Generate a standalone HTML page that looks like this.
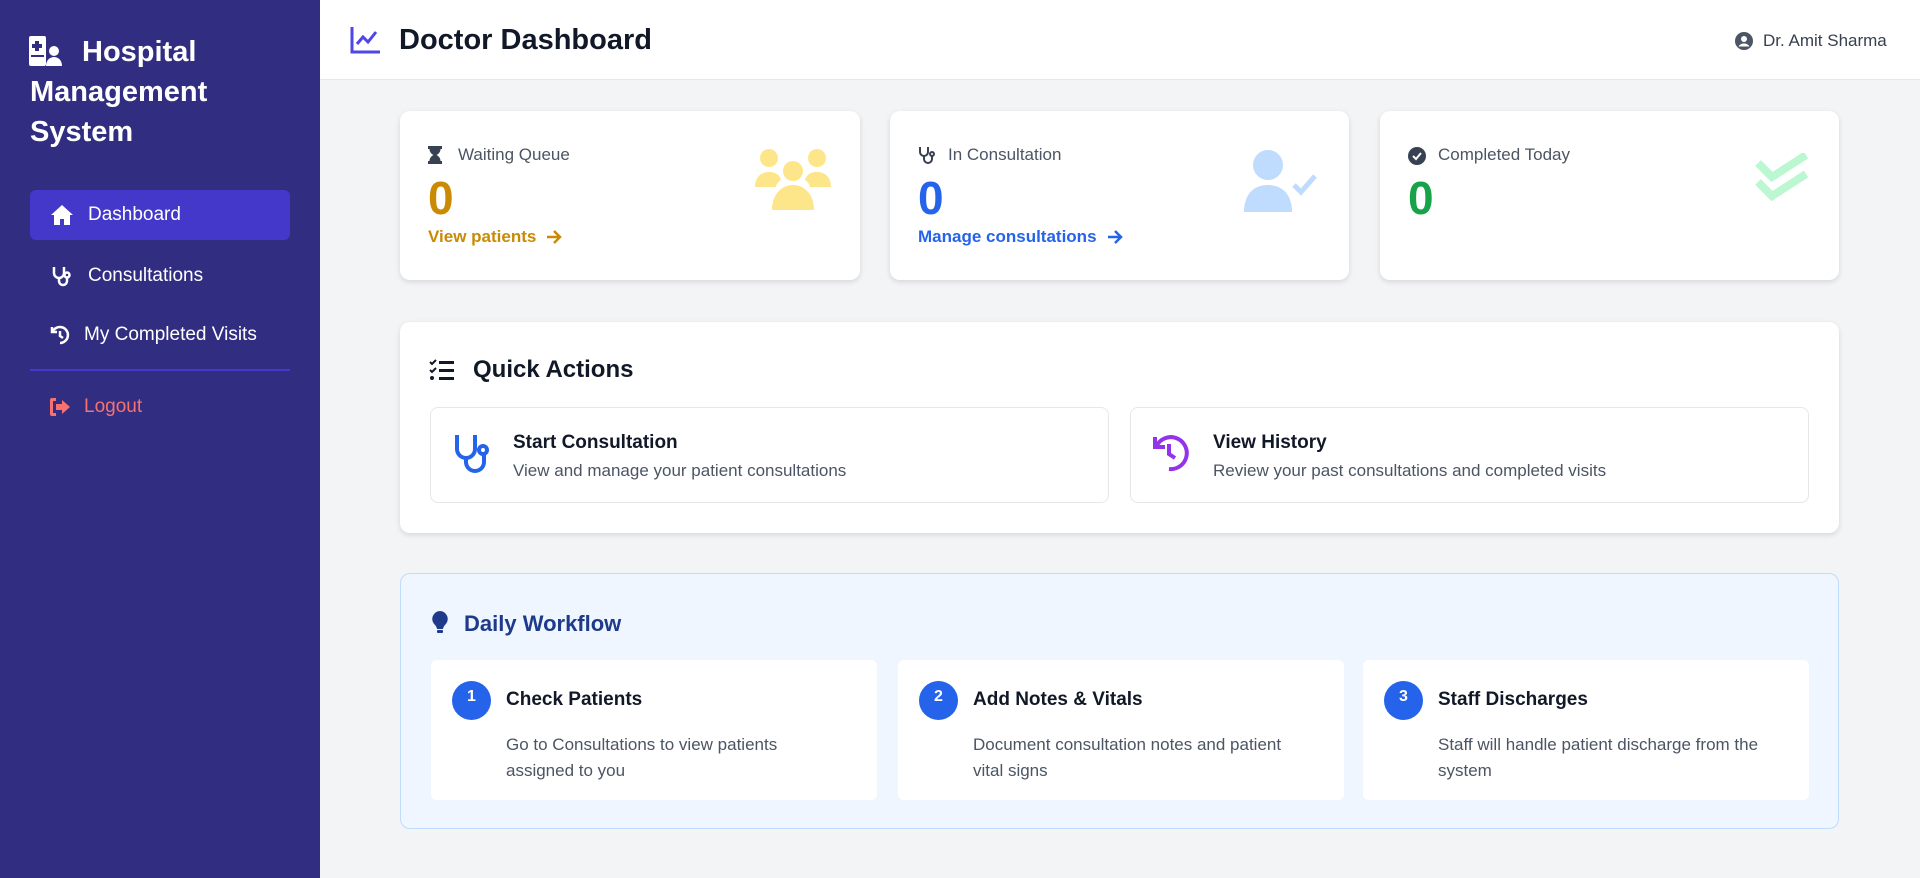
<!DOCTYPE html>
<html><head><meta charset="utf-8"><style>
*{box-sizing:border-box;margin:0;padding:0}
body{width:1920px;height:878px;overflow:hidden;background:#f3f4f6;font-family:"Liberation Sans",sans-serif;position:relative}
.a{position:absolute}
.side{left:0;top:0;width:320px;height:878px;background:#312e81;color:#fff}
.nav{position:absolute;left:30px;width:260px;height:50px;border-radius:6px;display:flex;align-items:center;font-size:19px;color:#fff}
.card{position:absolute;background:#fff;border-radius:10px;box-shadow:0 2px 6px rgba(0,0,0,.12)}
.lbl{position:absolute;top:34px;left:58px;font-size:17px;color:#4b5563}
.num{position:absolute;top:60px;left:28px;font-size:46px;font-weight:bold}
.lnk{position:absolute;top:116px;left:28px;font-size:17px;font-weight:bold;display:flex;align-items:center}
.lnk svg{margin-left:10px}
.ab{position:absolute;top:85px;height:96px;border:1px solid #e5e7eb;border-radius:8px;background:#fff}
.ab h3{position:absolute;left:82px;top:24px;font-size:19px;color:#111827}
.ab p{position:absolute;left:82px;top:53px;font-size:17px;color:#4b5563}
.st{position:absolute;top:86px;width:446px;height:140px;background:#fff;border-radius:6px}
.st .c{position:absolute;left:21px;top:21px;width:39px;height:39px;border-radius:50%;background:#2563eb;color:#fff;font-weight:bold;font-size:16px;text-align:center;line-height:32px}
.st h3{position:absolute;left:75px;top:29px;font-size:19px;color:#111827}
.st p{position:absolute;left:75px;top:72px;width:340px;font-size:17px;line-height:26px;color:#4b5563}
</style></head><body>
<div class="a side">
 <svg class="a" style="left:29px;top:36px" width="34" height="30" viewBox="0 0 34 30"><rect x="0" y="0" width="17" height="30" rx="2" fill="#fff"/><path d="M6 5h4v3h3v4h-3v3H6v-3H3V8h3z" fill="#312e81"/><rect x="2" y="19" width="13" height="2" fill="#312e81"/><circle cx="25" cy="15" r="5" fill="#fff"/><path d="M17 30c0-6 4-9 8-9s8 3 8 9z" fill="#fff"/></svg>
 <div class="a" style="left:30px;top:32px;font-size:29px;font-weight:bold;line-height:40px;width:270px;text-indent:52px">Hospital Management System</div>
 <div class="nav" style="top:190px;background:#4338ca"><svg style="margin:0 14px 0 20px" width="24" height="22" viewBox="0 0 24 22"><path d="M12 1L1 11h3v10h6v-6h4v6h6V11h3z" fill="#fff"/></svg>Dashboard</div>
 <div class="nav" style="top:251px"><svg style="margin:0 14px 0 20px" width="24" height="24" viewBox="0 0 24 24" fill="none" stroke="#fff" stroke-width="2.5"><path d="M4 3v6a5 5 0 0010 0V3M9 14v3a4 4 0 008 0v-3"/><circle cx="17" cy="11" r="2.5"/></svg>Consultations</div>
 <div class="nav" style="top:310px"><svg style="margin:0 12px 0 18px" width="24" height="24" viewBox="0 0 24 24" fill="none" stroke="#fff" stroke-width="2.5"><path d="M4 4v5h5"/><path d="M4.5 9A8 8 0 1112 20"/><path d="M12 8v5l3 2"/></svg>My Completed Visits</div>
 <div class="a" style="left:30px;top:369px;width:260px;height:2px;background:#4338ca"></div>
 <div class="nav" style="top:382px;color:#f87171"><svg style="margin:0 12px 0 18px" width="24" height="22" viewBox="0 0 24 22" fill="#f87171"><path d="M8 2H4a2 2 0 00-2 2v14a2 2 0 002 2h4v-3H5V5h3z"/><path d="M14 4l8 7-8 7v-4H8V8h6z"/></svg>Logout</div>
</div>
<div class="a" style="left:320px;top:0;width:1600px;height:80px;background:#fff;border-bottom:1px solid #e5e7eb"></div>
<svg class="a" style="left:350px;top:26px" width="32" height="28" viewBox="0 0 32 28" fill="none" stroke="#4f46e5" stroke-width="3"><path d="M2 1v25h28"/><path d="M7 18l6-7 5 5 8-10"/></svg>
<div class="a" style="left:399px;top:24px;font-size:29px;font-weight:bold;color:#111827">Doctor Dashboard</div>
<svg class="a" style="left:1735px;top:32px" width="18" height="18" viewBox="0 0 18 18"><circle cx="9" cy="9" r="9" fill="#4b5563"/><circle cx="9" cy="7" r="3" fill="#fff"/><path d="M3.5 14.5c1.5-2.5 3.5-3 5.5-3s4 .5 5.5 3" fill="#fff"/></svg>
<div class="a" style="left:1763px;top:31px;font-size:17px;color:#374151">Dr. Amit Sharma</div>

<div class="card" style="left:400px;top:111px;width:460px;height:169px">
 <svg class="a" style="left:28px;top:35px" width="14" height="18" viewBox="0 0 14 18" fill="#374151"><path d="M0 0h14v3h-1.5c0 3-2 5-4 6 2 1 4 3 4 6H14v3H0v-3h1.5c0-3 2-5 4-6-2-1-4-3-4-6H0z"/></svg>
 <div class="lbl">Waiting Queue</div><div class="num" style="color:#ca8a04">0</div>
 <div class="lnk" style="color:#ca8a04">View patients<svg width="16" height="14" viewBox="0 0 16 14" fill="none" stroke="#ca8a04" stroke-width="2.5"><path d="M1 7h13M8 1l6 6-6 6"/></svg></div>
 <svg class="a" style="left:354px;top:36px" width="78" height="64" viewBox="0 0 78 64" fill="#fde68a"><circle cx="15" cy="11" r="9"/><circle cx="63" cy="11" r="9"/><circle cx="39" cy="24" r="10"/><path d="M1 40c0-10 6-15 14-15s11 4 12 8c-3 2-5 5-5 7z"/><path d="M77 40c0-10-6-15-14-15s-11 4-12 8c3 2 5 5 5 7z"/><path d="M18 63c0-15 9-25 21-25s21 10 21 25z"/></svg>
</div>
<div class="card" style="left:890px;top:111px;width:459px;height:169px">
 <svg class="a" style="left:28px;top:35px" width="18" height="20" viewBox="0 0 18 20" fill="none" stroke="#374151" stroke-width="2"><path d="M2 1v5a4 4 0 008 0V1M6 10v3a4 4 0 008 0v-3"/><circle cx="14" cy="8" r="2"/></svg>
 <div class="lbl">In Consultation</div><div class="num" style="color:#2563eb">0</div>
 <div class="lnk" style="color:#2563eb">Manage consultations<svg width="16" height="14" viewBox="0 0 16 14" fill="none" stroke="#2563eb" stroke-width="2.5"><path d="M1 7h13M8 1l6 6-6 6"/></svg></div>
 <svg class="a" style="left:354px;top:38px" width="78" height="64" viewBox="0 0 78 64" fill="#bfdbfe"><circle cx="24" cy="16" r="15"/><path d="M0 63c0-18 10-27 24-27s24 9 24 27z"/><path d="M50 36l7 7 14-16" fill="none" stroke="#bfdbfe" stroke-width="5"/></svg>
</div>
<div class="card" style="left:1380px;top:111px;width:459px;height:169px">
 <svg class="a" style="left:28px;top:36px" width="18" height="18" viewBox="0 0 18 18"><circle cx="9" cy="9" r="9" fill="#374151"/><path d="M5 9l3 3 5-6" stroke="#fff" stroke-width="2" fill="none"/></svg>
 <div class="lbl">Completed Today</div><div class="num" style="color:#16a34a">0</div>
 <svg class="a" style="left:375px;top:42px" width="56" height="54" viewBox="0 0 56 54" fill="none" stroke="#bbf7d0" stroke-width="8"><path d="M3 10l14 14 34-22"/><path d="M3 29l14 14 34-22"/></svg>
</div>

<div class="card" style="left:400px;top:322px;width:1439px;height:211px">
 <svg class="a" style="left:29px;top:37px" width="26" height="22" viewBox="0 0 26 22" fill="#111827"><path d="M1 3l2 2 4-4" stroke="#111827" stroke-width="2" fill="none"/><path d="M1 11l2 2 4-4" stroke="#111827" stroke-width="2" fill="none"/><circle cx="3" cy="19" r="2"/><rect x="10" y="2" width="15" height="3"/><rect x="10" y="10" width="15" height="3"/><rect x="10" y="18" width="15" height="3"/></svg>
 <div class="a" style="left:73px;top:34px;font-size:24px;font-weight:bold;color:#111827">Quick Actions</div>
 <div class="ab" style="left:30px;width:679px"><svg class="a" style="left:22px;top:25px" width="36" height="42" viewBox="0 0 36 42" fill="none" stroke="#2563eb" stroke-width="4"><path d="M4 2v14a9 9 0 0018 0V2"/><path d="M13 25v4a9 9 0 0018 0v-7"/><circle cx="30" cy="17" r="4"/></svg><h3>Start Consultation</h3><p>View and manage your patient consultations</p></div>
 <div class="ab" style="left:730px;width:679px"><svg class="a" style="left:18px;top:25px" width="40" height="40" viewBox="0 0 40 40" fill="none" stroke="#9333ea" stroke-width="4"><path d="M6 4v10h10"/><path d="M7 14A16 16 0 1120 36"/><path d="M20 11v10l6 4"/></svg><h3>View History</h3><p>Review your past consultations and completed visits</p></div>
</div>

<div class="a" style="left:400px;top:573px;width:1439px;height:256px;background:#eff6ff;border:1px solid #bfdbfe;border-radius:10px">
 <svg class="a" style="left:31px;top:37px" width="16" height="24" viewBox="0 0 16 24" fill="#1e3a8a"><path d="M8 0a8 8 0 00-5 14c1 1 2 3 2 4h6c0-1 1-3 2-4A8 8 0 008 0z"/><rect x="5" y="19" width="6" height="3" rx="1"/></svg>
 <div class="a" style="left:63px;top:37px;font-size:22px;font-weight:bold;color:#1e3a8a">Daily Workflow</div>
 <div class="st" style="left:30px"><div class="c">1</div><h3>Check Patients</h3><p>Go to Consultations to view patients assigned to you</p></div>
 <div class="st" style="left:497px"><div class="c">2</div><h3>Add Notes &amp; Vitals</h3><p>Document consultation notes and patient vital signs</p></div>
 <div class="st" style="left:962px"><div class="c">3</div><h3>Staff Discharges</h3><p>Staff will handle patient discharge from the system</p></div>
</div>
</body></html>
